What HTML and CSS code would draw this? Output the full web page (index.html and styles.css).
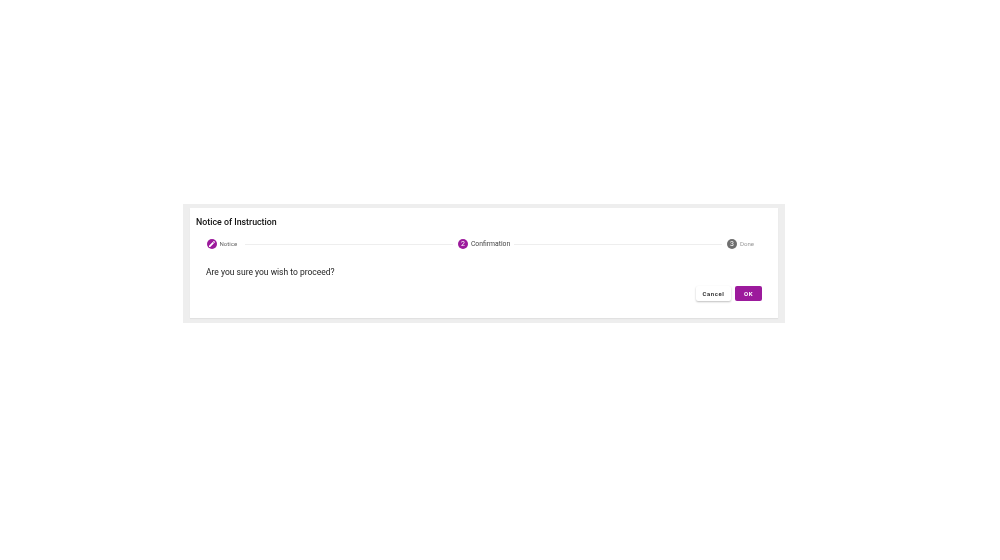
FILE: index.html
```html
<!DOCTYPE html>
<html lang="en">
<head>
<meta charset="utf-8">
<title>Notice of Instruction</title>
<link rel="stylesheet" href="styles.css">
</head>
<body>
<div class="backdrop">
  <div class="card">
    <h1 class="title">Notice of Instruction</h1>
    <div class="stepper">
      <div class="step step-first">
        <span class="dot dot-active">
          <svg viewBox="0 0 24 24" width="8" height="8"><path fill="#fff" d="M3 17.25V21h3.75L17.81 9.94l-3.75-3.75L3 17.25zM20.71 7.04a1 1 0 0 0 0-1.41l-2.34-2.34a1 1 0 0 0-1.41 0l-1.83 1.83 3.75 3.75 1.83-1.83z"/></svg>
        </span>
        <span class="label label-notice">Notice</span>
      </div>
      <div class="line"></div>
      <div class="step">
        <span class="dot dot-active">2</span>
        <span class="label label-current">Confirmation</span>
      </div>
      <div class="line"></div>
      <div class="step">
        <span class="dot dot-todo">3</span>
        <span class="label label-todo">Done</span>
      </div>
    </div>
    <p class="message">Are you sure you wish to proceed?</p>
    <div class="actions">
      <button class="btn btn-cancel">Cancel</button>
      <button class="btn btn-ok">OK</button>
    </div>
  </div>
</div>
</body>
</html>
```
FILE: styles.css
```css
* { box-sizing: border-box; }
html, body { margin: 0; background: #fff; }
body {
  width: 1000px;
  height: 560px;
  padding: 204px 0 0 183px;
  overflow: hidden;
  font-family: Roboto, "Liberation Sans", sans-serif;
}
.backdrop {
  width: 602px;
  height: 119px;
  padding: 4px 7px 5px;
  background: #eeeeee;
  filter: blur(0.3px);
}
.card {
  height: 110px;
  padding: 8px 16px 0 6px;
  background: #fff;
  box-shadow: 0 1px 1px rgba(0, 0, 0, 0.05);
}
.title {
  margin: 0;
  font-size: 8.8px;
  line-height: 12px;
  font-weight: 500;
  color: #111;
}
.stepper {
  display: flex;
  align-items: center;
  margin: 10px 8px 0 10.5px;
  height: 12px;
}
.step {
  display: flex;
  align-items: center;
  gap: 3px;
}
.step-first { padding-right: 4px; }
.dot {
  display: flex;
  align-items: center;
  justify-content: center;
  width: 10px;
  height: 10px;
  border-radius: 50%;
  color: #fff;
  font-size: 7px;
  line-height: 10px;
}
.dot-active { background: #9c1a9c; }
.dot-todo { background: #6f6f6f; }
.label { font-size: 6.1px; line-height: 10px; }
.label-notice { color: #666; }
.label-current { font-size: 6.8px; color: #444; }
.label-todo { color: #999; }
.line {
  flex: 1;
  height: 1px;
  margin: 0 5px 0 4px;
  background: #eeeeee;
}
.message {
  margin: 16px 0 0 10px;
  font-size: 8.5px;
  line-height: 12px;
  color: #1c1c1c;
}
.actions {
  display: flex;
  justify-content: flex-end;
  gap: 4px;
  margin-top: 8px;
}
.btn {
  height: 15px;
  padding: 0;
  border: 0;
  border-radius: 2px;
  font-family: inherit;
  font-size: 6px;
  font-weight: 700;
  letter-spacing: 0.6px;
}
.btn-cancel {
  width: 35px;
  background: #fff;
  color: #333;
  box-shadow: 0 1px 2px rgba(0, 0, 0, 0.25);
}
.btn-ok {
  width: 27px;
  background: #9c1a9c;
  color: #fff;
}
```
